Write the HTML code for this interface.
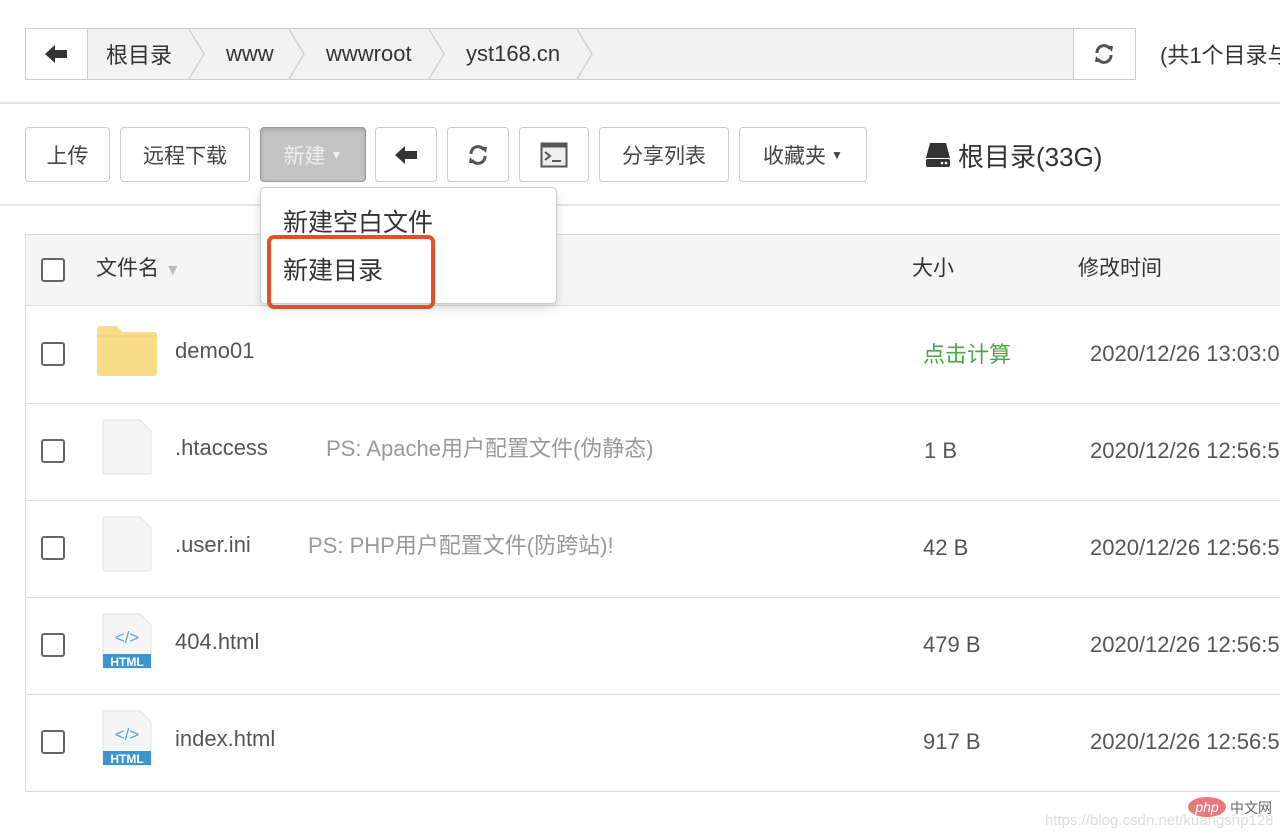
<!DOCTYPE html>
<html><head><meta charset="utf-8"><style>
*{margin:0;padding:0;box-sizing:border-box}
body{width:1280px;height:839px;overflow:hidden;background:#fff;font-family:"Liberation Sans","Noto Sans CJK SC",sans-serif;color:#444;position:relative}
.a{position:absolute}
.btn{position:absolute;top:127px;height:55px;border:1px solid #ccc;border-radius:4px;background:#fff;font-size:21px;color:#444;display:flex;align-items:center;justify-content:center}
.t{position:absolute;font-size:22px;color:#555;white-space:nowrap}
.cb{position:absolute;left:41px;width:24px;height:24px;border:2px solid #666;border-radius:3px;background:#fff}
.row{position:absolute;left:25px;width:1255px;height:1px;background:#ddd}
</style></head><body>
<div class="a" style="left:25px;top:28px;width:1111px;height:52px;border:1px solid #ccc;background:#f2f2f2"></div>
<div class="a" style="left:26px;top:29px;width:62px;height:50px;background:#fff;border-right:1px solid #ccc"></div>
<svg class="a" style="left:44px;top:44px" width="24" height="20" viewBox="0 0 24 20"><path d="M1 10L11 1V6H23V14H11V19Z" fill="#333"/></svg>
<svg class="a" style="left:88px;top:29px" width="520" height="50">
<g fill="none" stroke="#d0d0d0" stroke-width="1.5"><polyline points="101,0 116,25 101,50"/><polyline points="201,0 216,25 201,50"/><polyline points="341,0 356,25 341,50"/><polyline points="489,0 504,25 489,50"/></g></svg>
<div class="t" style="left:106px;top:38px;font-size:22px;color:#333">根目录</div>
<div class="t" style="left:226px;top:41px;font-size:22px;color:#333">www</div>
<div class="t" style="left:326px;top:41px;font-size:22px;color:#333">wwwroot</div>
<div class="t" style="left:466px;top:41px;font-size:22px;color:#333">yst168.cn</div>
<div class="a" style="left:1073px;top:29px;width:62px;height:50px;background:#fff;border-left:1px solid #ccc"></div>
<svg class="a" style="left:1093px;top:43px" width="22" height="22" viewBox="0 0 22 22"><g fill="none" stroke="#555" stroke-width="3"><path d="M4 10A7 7 0 0 1 17 6"/><path d="M18 12A7 7 0 0 1 5 16"/></g><path d="M14 3L20 3L19 9Z M8 19L2 19L3 13Z" fill="#555"/></svg>
<div class="t" style="left:1160px;top:38px;font-size:22px;color:#333">(共1个目录与</div>
<div class="a" style="left:0;top:102px;width:1280px;height:2px;background:#e4e4e4"></div>
<div class="btn" style="left:25px;width:85px">上传</div>
<div class="btn" style="left:120px;width:130px">远程下载</div>
<div class="btn" style="left:260px;width:106px;background:#c4c4c4;border-color:#999;color:#eee;box-shadow:inset 0 2px 4px rgba(0,0,0,.15)">新建<span style="font-size:12px;margin-left:5px">▼</span></div>
<div class="btn" style="left:375px;width:62px"><svg width="24" height="20" viewBox="0 0 24 20"><path d="M1 10L11 1V6H23V14H11V19Z" fill="#333"/></svg></div>
<div class="btn" style="left:447px;width:62px"><svg width="22" height="22" viewBox="0 0 22 22"><g fill="none" stroke="#555" stroke-width="3"><path d="M4 10A7 7 0 0 1 17 6"/><path d="M18 12A7 7 0 0 1 5 16"/></g><path d="M14 3L20 3L19 9Z M8 19L2 19L3 13Z" fill="#555"/></svg></div>
<div class="btn" style="left:519px;width:70px"><svg width="28" height="26" viewBox="0 0 28 26"><rect x="1.5" y="1.5" width="25" height="23" fill="#eee" stroke="#555" stroke-width="2"/><rect x="1.5" y="1.5" width="25" height="4" fill="#555"/><path d="M5 10L10 14L5 18" fill="none" stroke="#555" stroke-width="2"/><path d="M12 19H21" stroke="#555" stroke-width="2"/></svg></div>
<div class="btn" style="left:599px;width:130px">分享列表</div>
<div class="btn" style="left:739px;width:128px">收藏夹<span style="font-size:12px;margin-left:5px">▼</span></div>
<svg class="a" style="left:925px;top:142px" width="26" height="26" viewBox="0 0 26 26"><path d="M5 1H21L25 16H1Z" fill="#333"/><rect x="1" y="17" width="24" height="8" rx="2" fill="#333"/><circle cx="17" cy="21" r="1.3" fill="#fff"/><circle cx="21" cy="21" r="1.3" fill="#fff"/></svg>
<div class="t" style="left:958px;top:137px;font-size:26px;color:#333">根目录(33G)</div>
<div class="a" style="left:0;top:204px;width:1280px;height:2px;background:#e4e4e4"></div>
<div class="a" style="left:25px;top:234px;width:1255px;height:558px;border:1px solid #ddd;border-right:none"></div>
<div class="a" style="left:26px;top:235px;width:1254px;height:71px;background:#f5f5f5;border-bottom:1px solid #ddd"></div>
<div class="cb" style="top:258px"></div>
<div class="t" style="left:96px;top:252px;color:#333;font-size:21px">文件名 <span style="color:#bbb;font-size:16px">▼</span></div>
<div class="t" style="left:912px;top:252px;color:#333;font-size:21px">大小</div>
<div class="t" style="left:1078px;top:252px;color:#333;font-size:21px">修改时间</div>
<div class="row" style="top:403px"></div><div class="row" style="top:500px"></div><div class="row" style="top:597px"></div><div class="row" style="top:694px"></div>
<div class="cb" style="top:342px"></div>
<svg class="a" style="left:97px;top:326px" width="60" height="50"><path d="M3 0H20L25 6H57Q60 6 60 9V47Q60 50 57 50H3Q0 50 0 47V3Q0 0 3 0Z" fill="#f9dc87"/><path d="M0 10H60" stroke="#f2cf6a"/></svg>
<div class="t" style="left:175px;top:338px">demo01</div>
<div class="t" style="left:923px;top:337px;color:#4ca64c">点击计算</div>
<div class="t" style="left:1090px;top:341px">2020/12/26 13:03:0</div>
<div class="cb" style="top:439px"></div>
<svg class="a" style="left:102px;top:419px" width="50" height="56"><path d="M3 1H38L49 12V53Q49 55 47 55H3Q1 55 1 53V3Q1 1 3 1Z" fill="#f5f5f5" stroke="#e0e0e0"/></svg>
<div class="t" style="left:175px;top:435px">.htaccess</div>
<div class="t" style="left:326px;top:431px;color:#999">PS: Apache用户配置文件(伪静态)</div>
<div class="t" style="left:924px;top:438px">1 B</div>
<div class="t" style="left:1090px;top:438px">2020/12/26 12:56:5</div>
<div class="cb" style="top:536px"></div>
<svg class="a" style="left:102px;top:516px" width="50" height="56"><path d="M3 1H38L49 12V53Q49 55 47 55H3Q1 55 1 53V3Q1 1 3 1Z" fill="#f5f5f5" stroke="#e0e0e0"/></svg>
<div class="t" style="left:175px;top:532px">.user.ini</div>
<div class="t" style="left:308px;top:528px;color:#999">PS: PHP用户配置文件(防跨站)!</div>
<div class="t" style="left:923px;top:535px">42 B</div>
<div class="t" style="left:1090px;top:535px">2020/12/26 12:56:5</div>
<div class="cb" style="top:633px"></div>
<svg class="a" style="left:102px;top:613px" width="50" height="56"><path d="M3 1H38L49 12V53Q49 55 47 55H3Q1 55 1 53V3Q1 1 3 1Z" fill="#f5f5f5" stroke="#e0e0e0"/><text x="25" y="30" text-anchor="middle" font-size="17" fill="#5aa3d8" font-family="Liberation Sans">&lt;/&gt;</text><rect x="1" y="41" width="48" height="14" fill="#3d95d0"/><text x="25" y="53" text-anchor="middle" font-size="12" font-weight="bold" fill="#fff" font-family="Liberation Sans">HTML</text></svg>
<div class="t" style="left:175px;top:629px">404.html</div>
<div class="t" style="left:923px;top:632px">479 B</div>
<div class="t" style="left:1090px;top:632px">2020/12/26 12:56:5</div>
<div class="cb" style="top:730px"></div>
<svg class="a" style="left:102px;top:710px" width="50" height="56"><path d="M3 1H38L49 12V53Q49 55 47 55H3Q1 55 1 53V3Q1 1 3 1Z" fill="#f5f5f5" stroke="#e0e0e0"/><text x="25" y="30" text-anchor="middle" font-size="17" fill="#5aa3d8" font-family="Liberation Sans">&lt;/&gt;</text><rect x="1" y="41" width="48" height="14" fill="#3d95d0"/><text x="25" y="53" text-anchor="middle" font-size="12" font-weight="bold" fill="#fff" font-family="Liberation Sans">HTML</text></svg>
<div class="t" style="left:175px;top:726px">index.html</div>
<div class="t" style="left:923px;top:729px">917 B</div>
<div class="t" style="left:1090px;top:729px">2020/12/26 12:56:5</div>
<div class="a" style="left:260px;top:187px;width:297px;height:117px;background:#fff;border:1px solid #ccc;border-radius:5px;box-shadow:0 4px 10px rgba(0,0,0,.15)"></div>
<div class="t" style="left:283px;top:203px;font-size:25px;color:#333">新建空白文件</div>
<div class="t" style="left:283px;top:251px;font-size:25px;color:#333">新建目录</div>
<div class="a" style="left:267px;top:235px;width:168px;height:74px;border:4px solid #e0502a;border-radius:7px"></div>
<div class="a" style="left:1188px;top:797px;width:38px;height:20px;border-radius:50%;background:#e6797c;color:#fff;font-size:14px;font-style:italic;text-align:center;line-height:20px">php</div>
<div class="t" style="left:1230px;top:798px;font-size:14px;color:#666">中文网</div>
<div class="t" style="left:1045px;top:812px;font-size:15px;color:#ddd">https://blog.csdn.net/kuangshp128</div>
</body></html>
